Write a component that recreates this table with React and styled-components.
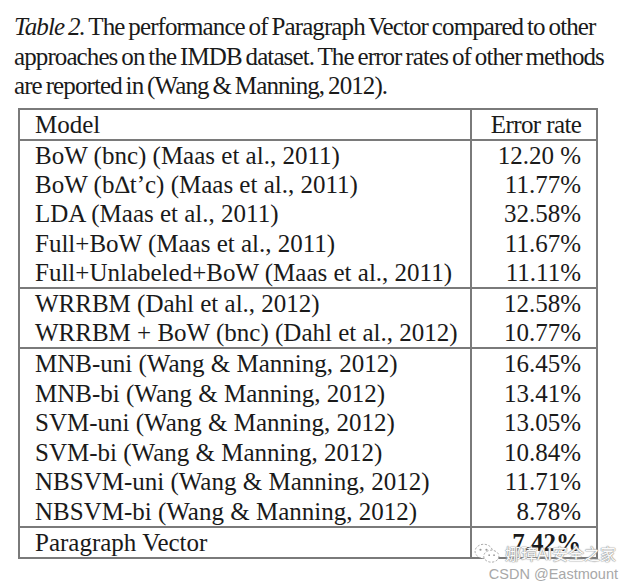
import React from 'react'
import styled, { createGlobalStyle } from 'styled-components'

const GlobalStyle = createGlobalStyle`
  body {
    margin: 0;
    background: #ffffff;
    font-family: "Liberation Serif", "Times New Roman", serif;
    color: #1a1a1a;
  }
`

const groups = [
  [
    ['BoW (bnc) (Maas et al., 2011)', '12.20 %'],
    ['BoW (b\u2206t\u2019c) (Maas et al., 2011)', '11.77%'],
    ['LDA (Maas et al., 2011)', '32.58%'],
    ['Full+BoW (Maas et al., 2011)', '11.67%'],
    ['Full+Unlabeled+BoW (Maas et al., 2011)', '11.11%'],
  ],
  [
    ['WRRBM (Dahl et al., 2012)', '12.58%'],
    ['WRRBM + BoW (bnc) (Dahl et al., 2012)', '10.77%'],
  ],
  [
    ['MNB-uni (Wang & Manning, 2012)', '16.45%'],
    ['MNB-bi (Wang & Manning, 2012)', '13.41%'],
    ['SVM-uni (Wang & Manning, 2012)', '13.05%'],
    ['SVM-bi (Wang & Manning, 2012)', '10.84%'],
    ['NBSVM-uni (Wang & Manning, 2012)', '11.71%'],
    ['NBSVM-bi (Wang & Manning, 2012)', '8.78%'],
  ],
]

const Page = styled.div`
  position: relative;
  width: 633px;
  height: 585px;
  padding: 12px 0 0 14px;
  box-sizing: border-box;
`

const Caption = styled.p`
  margin: 0;
  width: 600px;
  font-size: 25px;
  line-height: 29.5px;
  letter-spacing: -0.9px;
  word-spacing: -1.5px;
`

const Label = styled.em`
  font-style: italic;
`

const Table = styled.table`
  margin: 7px 0 0 4px;
  width: 578px;
  table-layout: fixed;
  border-collapse: collapse;
  font-size: 25px;
  border: 2px solid #7a7a7a;
`

const Cell = styled.td`
  height: 29.6px;
  padding: 0 15px;
  line-height: 29px;
  white-space: nowrap;
  overflow: visible;
  text-align: ${p => (p.$num ? 'right' : 'left')};
  font-weight: ${p => (p.$bold ? 'bold' : 'normal')};
  border-left: ${p => (p.$num ? '2px solid #7a7a7a' : 'none')};
  box-sizing: border-box;
`

const HeadCell = styled(Cell)`
  padding: ${p => (p.$num ? '0 6px 0 10px' : '0 15px')};
  text-align: ${p => (p.$num ? 'center' : 'left')};
  letter-spacing: ${p => (p.$num ? '-0.6px' : '0')};
`

const Group = styled.tbody`
  border-top: 2px solid #7a7a7a;
`

const Watermark = styled.div`
  position: absolute;
  right: 15px;
  bottom: 3px;
  display: flex;
  flex-direction: column;
  align-items: flex-end;
  gap: 1px;
  font-family: "Liberation Sans", "Noto Sans CJK SC", sans-serif;
`

const Brand = styled.div`
  display: flex;
  align-items: center;
  gap: 5px;
  margin-right: 2px;
  font-size: 16px;
  color: #fafafa;
  text-shadow: 0 0 1px #8a8a8a, 0 0 1px #8a8a8a, 0 0 2px #bbb;
`

const Credit = styled.div`
  font-size: 14.5px;
  color: #a8a8a8;
`

const WeChat = () => (
  <svg width="26" height="21" viewBox="0 0 24 18">
    <ellipse cx="9" cy="7" rx="8" ry="6.5" fill="#fff" stroke="#999" strokeWidth="0.8" strokeDasharray="2 1.5" />
    <ellipse cx="16" cy="11.5" rx="7" ry="5.5" fill="#fff" stroke="#999" strokeWidth="0.8" strokeDasharray="2 1.5" />
    <circle cx="6" cy="5.5" r="1" fill="#999" />
    <circle cx="11.5" cy="5.5" r="1" fill="#999" />
    <circle cx="14" cy="10.5" r="0.8" fill="#999" />
    <circle cx="18.5" cy="10.5" r="0.8" fill="#999" />
  </svg>
)

export default function App() {
  return (
    <>
      <GlobalStyle />
      <Page>
        <Caption>
          <Label>Table 2.</Label> The performance of Paragraph Vector compared to other
          approaches on the IMDB dataset. The error rates of other methods
          are reported in (Wang &amp; Manning, 2012).
        </Caption>
        <Table>
          <colgroup>
            <col style={{ width: '452px' }} />
            <col style={{ width: '126px' }} />
          </colgroup>
          <tbody>
            <tr>
              <HeadCell>Model</HeadCell>
              <HeadCell $num>Error rate</HeadCell>
            </tr>
          </tbody>
          {groups.map((rows, i) => (
            <Group key={i}>
              {rows.map(([model, rate]) => (
                <tr key={model}>
                  <Cell>{model}</Cell>
                  <Cell $num>{rate}</Cell>
                </tr>
              ))}
            </Group>
          ))}
          <Group>
            <tr>
              <Cell>Paragraph Vector</Cell>
              <Cell $num $bold>7.42%</Cell>
            </tr>
          </Group>
        </Table>
        <Watermark>
          <Brand>
            <WeChat />
            娜璋AI安全之家
          </Brand>
          <Credit>CSDN @Eastmount</Credit>
        </Watermark>
      </Page>
    </>
  )
}
